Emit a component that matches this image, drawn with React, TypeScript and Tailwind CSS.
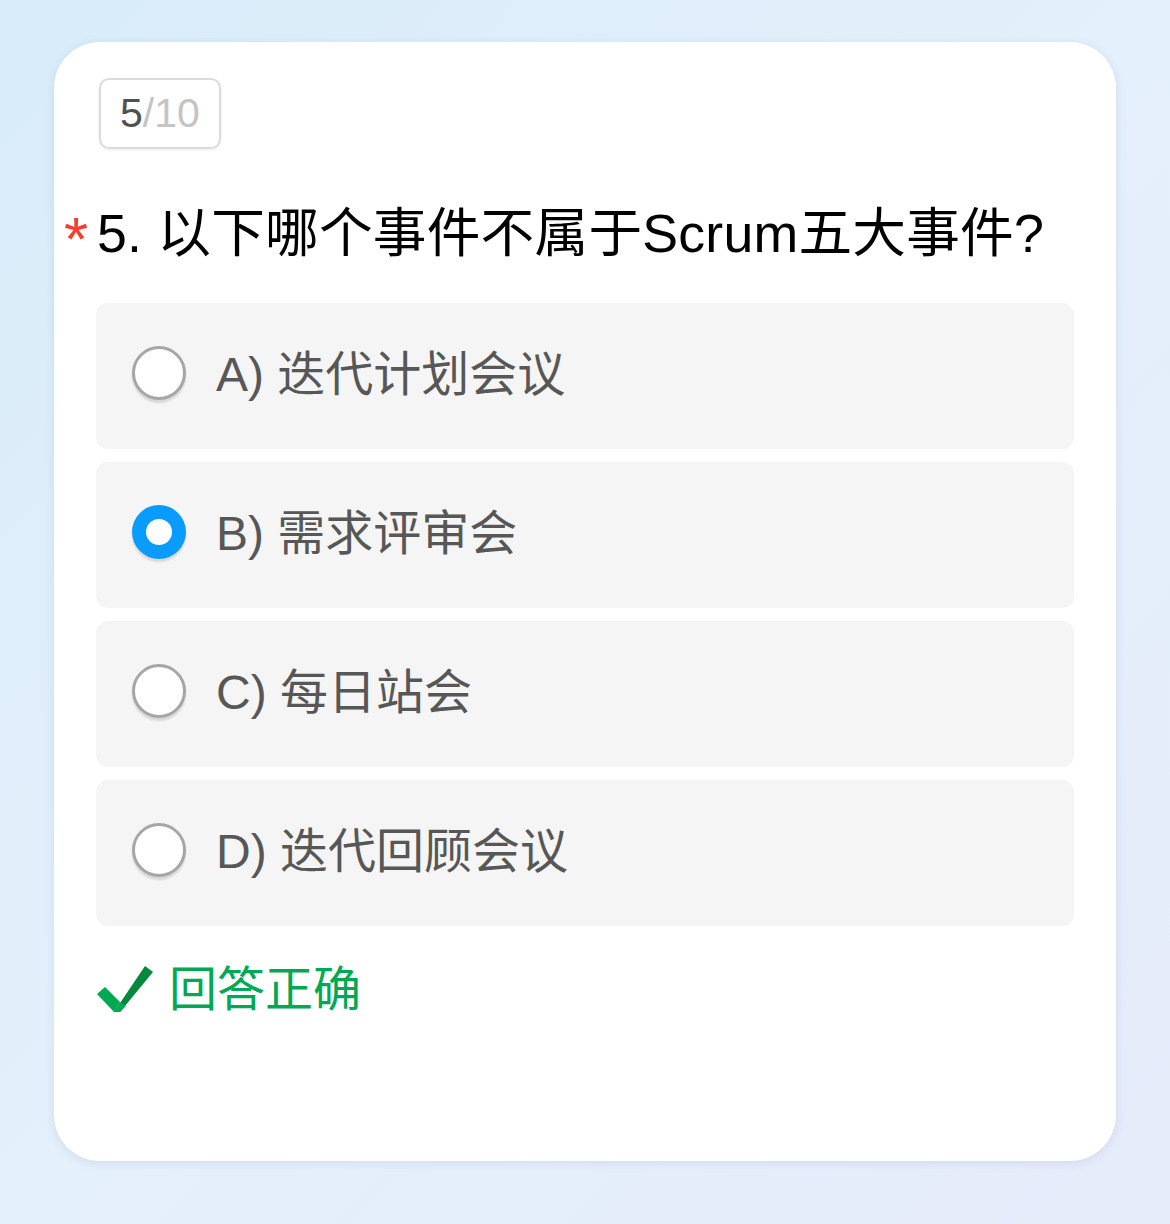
import React from "react";

const options = [
  { label: "A) 迭代计划会议", selected: false },
  { label: "B) 需求评审会", selected: true },
  { label: "C) 每日站会", selected: false },
  { label: "D) 迭代回顾会议", selected: false },
];

function Radio({ selected }: { selected: boolean }) {
  if (selected) {
    return (
      <div className="w-[54px] h-[54px] rounded-full bg-[#0a9bff] flex items-center justify-center shrink-0 -mt-[6px] shadow-[0_3px_2px_rgba(0,0,0,0.12)]">
        <div className="w-[26px] h-[26px] rounded-full bg-white" />
      </div>
    );
  }
  return (
    <div className="w-[54px] h-[54px] rounded-full bg-white border-[3px] border-[#a6a6a6] shrink-0 -mt-[6px] shadow-[0_3px_2px_rgba(0,0,0,0.12)]" />
  );
}

export default function App() {
  const font = { fontFamily: '"Liberation Sans", "Noto Sans CJK SC", sans-serif' };
  return (
    <div
      className="w-[1170px] h-[1224px] bg-gradient-to-br from-[#d8ecf9] via-[#e4f0fb] to-[#e6ebfa] pt-[42px] px-[54px]"
      style={font}
    >
      <div className="w-[1062px] h-[1119px] bg-white rounded-[46px] shadow-[0_2px_10px_rgba(120,140,170,0.18)] px-[42px] pt-[36px]">
        <div className="ml-[3px] inline-flex items-center h-[71px] px-[19px] border-2 border-[#dcdcdc] rounded-[10px] shadow-[0_1px_3px_rgba(0,0,0,0.08)] text-[41px] leading-none">
          <span className="text-[#505050]">5</span>
          <span className="text-[#c4c4c4]">/10</span>
        </div>
        <div className="relative mt-[48px] h-[72px] flex items-center text-[53.7px] leading-[72px] text-black">
          <span className="absolute left-[-32px] top-[6px] text-[#ff3b30] text-[62px] leading-[72px]">*</span>
          <span className="ml-[1px] tracking-[0.2px]">5. 以下哪个事件不属于Scrum五大事件?</span>
        </div>
        <div className="mt-[34px] flex flex-col gap-[13px]">
          {options.map((o) => (
            <div
              key={o.label}
              className="h-[146px] bg-[#f5f5f5] rounded-[12px] flex items-center pl-[36px] gap-[30px]"
            >
              <Radio selected={o.selected} />
              <span className="text-[48px] leading-none text-[#575757] -mt-[2px]">{o.label}</span>
            </div>
          ))}
        </div>
        <div className="mt-[32px] flex items-center h-[64px] gap-[16px] ml-[1px]">
          <svg width="56" height="48" viewBox="0 0 56 48">
            <polygon points="0,28 8,21 23,36 17,46" fill="#00a854" />
            <polygon points="17,46 48,0 56,6 23,46" fill="#00893c" />
            <polygon points="17,46 23,36 29,40 23,46" fill="#00a854" />
          </svg>
          <span className="text-[48px] leading-none text-[#00a854]">回答正确</span>
        </div>
      </div>
    </div>
  );
}
